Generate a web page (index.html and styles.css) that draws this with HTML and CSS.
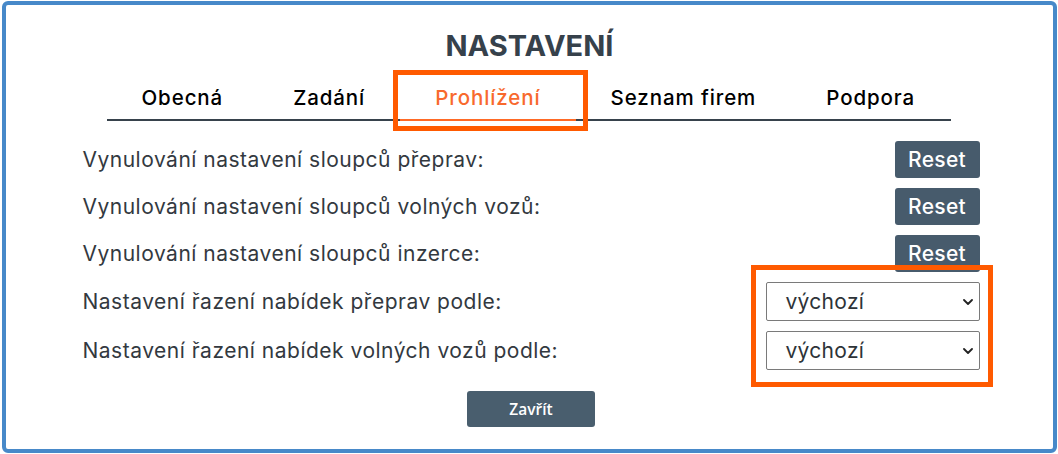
FILE: index.html
```html
<!DOCTYPE html>
<html lang="cs">
<head>
<meta charset="utf-8">
<title>Nastavení</title>
<link rel="stylesheet" href="styles.css">
</head>
<body>
<div class="dialog">
  <h1 class="title">NASTAVENÍ</h1>
  <div class="content">
    <nav class="tabs">
      <span class="tab">Obecná</span>
      <span class="tab">Zadání</span>
      <span class="tab active">Prohlížení</span>
      <span class="tab">Seznam firem</span>
      <span class="tab">Podpora</span>
    </nav>
    <div class="rows">
      <div class="row">
        <span class="label">Vynulování nastavení sloupců přeprav:</span>
        <button class="reset">Reset</button>
      </div>
      <div class="row">
        <span class="label">Vynulování nastavení sloupců volných vozů:</span>
        <button class="reset">Reset</button>
      </div>
      <div class="row">
        <span class="label">Vynulování nastavení sloupců inzerce:</span>
        <button class="reset">Reset</button>
      </div>
      <div class="row sel">
        <span class="label">Nastavení řazení nabídek přeprav podle:</span>
        <div class="select"><span>výchozí</span><svg class="chev" viewBox="0 0 10 6" width="10" height="6"><path d="M1 1 L5 5 L9 1" fill="none" stroke="#222" stroke-width="1.8" stroke-linecap="round" stroke-linejoin="round"/></svg></div>
      </div>
      <div class="row sel">
        <span class="label">Nastavení řazení nabídek volných vozů podle:</span>
        <div class="select"><span>výchozí</span><svg class="chev" viewBox="0 0 10 6" width="10" height="6"><path d="M1 1 L5 5 L9 1" fill="none" stroke="#222" stroke-width="1.8" stroke-linecap="round" stroke-linejoin="round"/></svg></div>
      </div>
    </div>
    <div class="footer">
      <button class="close">Zavřít</button>
    </div>
  </div>
  <div class="mark mark-tab"></div>
  <div class="mark mark-select"></div>
</div>
</body>
</html>
```

FILE: styles.css
```css
* { box-sizing: border-box; }
html, body { margin: 0; padding: 0; background: #ffffff; }
body {
  font-family: Inter, "Open Sans", "Liberation Sans", sans-serif;
  width: 1058px;
  height: 454px;
  overflow: hidden;
}
.dialog {
  position: relative;
  margin: 1px 1px 0 2px;
  height: 452px;
  border: 4px solid #4789c9;
  border-radius: 6px;
  background: #fff;
}
.title {
  margin: 0;
  padding-top: 21px;
  height: 64px;
  text-align: center;
  font-size: 29px;
  line-height: 40px;
  font-weight: 700;
  color: #36414b;
  letter-spacing: 0;
}
.content {
  width: 900px;
  margin: 0 auto;
  padding-left: 3px;
}
.tabs {
  display: flex;
  margin: 0 29px 0 24px;
  border-bottom: 2px solid #37424c;
  height: 52px;
  align-items: flex-end;
}
.tab {
  padding: 0 35px 8px;
  margin-bottom: -2px;
  border-bottom: 2px solid transparent;
  font-size: 20.5px;
  line-height: 26px;
  font-weight: 500;
  letter-spacing: 0.9px;
  color: #000;
  white-space: nowrap;
}
.tab.active {
  color: #f8692d;
  border-bottom-color: #ff6a26;
}
.rows {
  display: flex;
  flex-direction: column;
  gap: 10px;
  padding-top: 20px;
}
.row {
  display: flex;
  align-items: center;
  justify-content: space-between;
  height: 37px;
}
.row.sel { height: 39px; }
.label {
  font-size: 21px;
  color: #33393f;
  letter-spacing: 0.5px;
}
.reset {
  width: 85px;
  height: 37px;
  border: 0;
  border-radius: 3px;
  background: #475b6c;
  color: #fff;
  font-family: inherit;
  font-size: 21px;
  font-weight: 500;
  letter-spacing: 0.3px;
  padding: 0;
}
.select {
  width: 214px;
  height: 39px;
  border: 1px solid #7a7a7a;
  border-radius: 2px;
  display: flex;
  align-items: center;
  justify-content: space-between;
  padding: 0 6px 0 19px;
  font-size: 21px;
  letter-spacing: 0.3px;
  color: #2d3338;
}
.chev { display: block; margin-top: 1px; }
.footer {
  display: flex;
  justify-content: center;
  padding-top: 21px;
}
.close {
  width: 128px;
  height: 36px;
  border: 0;
  border-radius: 3px;
  background: #495e6e;
  color: #fff;
  font-family: "Open Sans", sans-serif;
  font-size: 15.5px;
  font-weight: 600;
  padding: 0;
}
.mark {
  position: absolute;
  border: 5px solid #ff5a00;
  pointer-events: none;
}
.mark-tab {
  left: 387px;
  top: 65px;
  width: 195px;
  height: 61px;
}
.mark-select {
  left: 745px;
  top: 260px;
  width: 242px;
  height: 122px;
}
```
